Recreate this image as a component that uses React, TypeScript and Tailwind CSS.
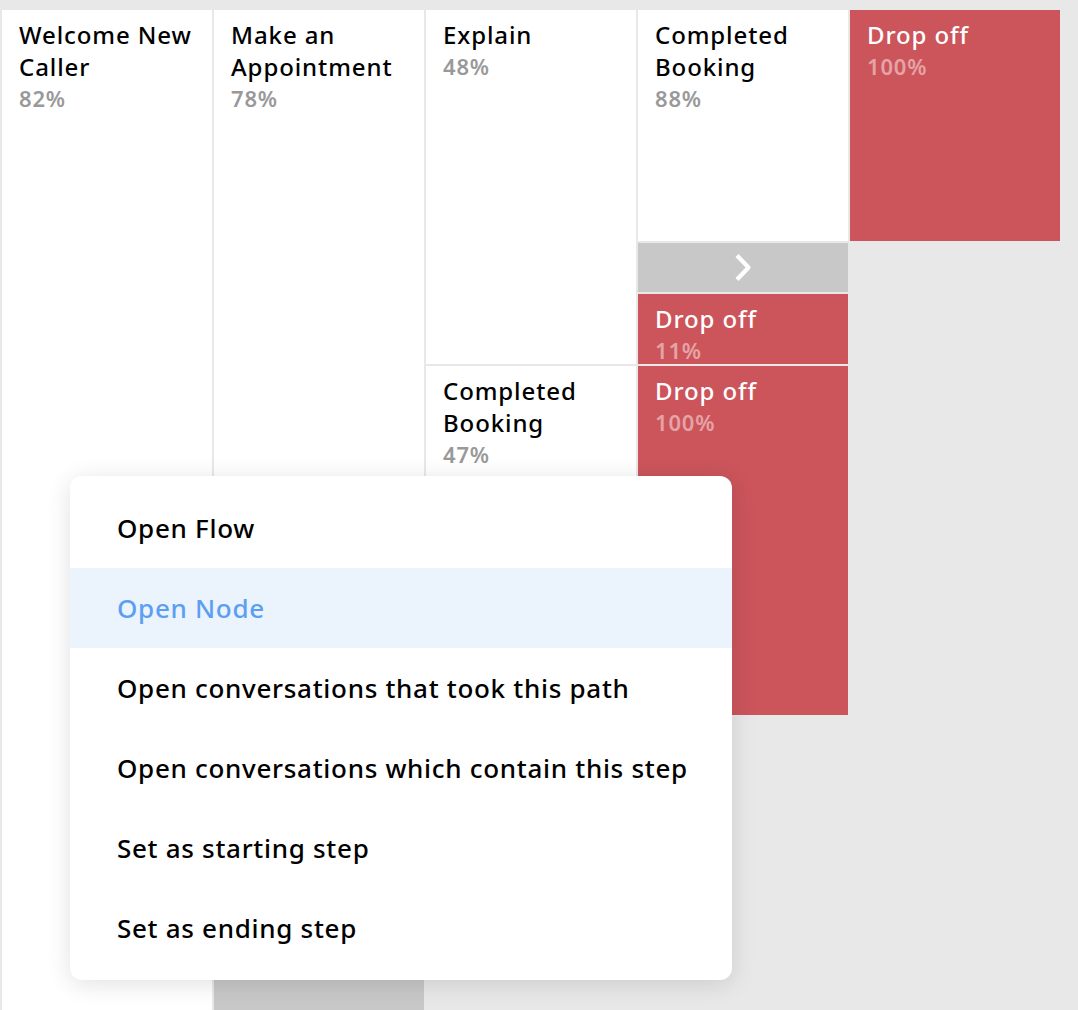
type Cell = {
  title: string;
  pct: string;
  h: string;
  drop?: boolean;
};

const font = { fontFamily: "'Noto Sans', Lato, sans-serif" };

function Node({ title, pct, h, drop }: Cell) {
  return (
    <div
      className={`${h} shrink-0 overflow-hidden px-[17px] pt-[9px] ${drop ? "bg-[#cb555b]" : "bg-white"}`}
    >
      <div
        className={`text-[24px] leading-[32px] font-medium tracking-[0.9px] ${drop ? "text-white" : "text-black"}`}
      >
        {title}
      </div>
      <div
        className={`text-[22px] leading-[30px] font-semibold tracking-[0.8px] ${drop ? "text-[#e6a3a6]" : "text-[#999999]"}`}
      >
        {pct}
      </div>
    </div>
  );
}

const menuItems = [
  "Open Flow",
  "Open Node",
  "Open conversations that took this path",
  "Open conversations which contain this step",
  "Set as starting step",
  "Set as ending step",
];

export default function App() {
  return (
    <div
      className="relative h-[1010px] w-[1078px] overflow-hidden bg-[#e8e8e8]"
      style={font}
    >
      <div className="flex h-full gap-[2px] pl-[2px] pt-[10px]">
        {/* column 1 */}
        <div className="flex w-[210px] flex-col">
          <Node title="Welcome New Caller" pct="82%" h="flex-1" />
        </div>

        {/* column 2 */}
        <div className="flex w-[210px] flex-col gap-[2px]">
          <Node title="Make an Appointment" pct="78%" h="h-[966px]" />
          <div className="flex-1 bg-[#c8c8c8]" />
        </div>

        {/* column 3 */}
        <div className="flex w-[210px] flex-col gap-[2px]">
          <Node title="Explain" pct="48%" h="h-[354px]" />
          <Node title="Completed Booking" pct="47%" h="h-[350px]" />
        </div>

        {/* column 4 */}
        <div className="flex w-[210px] flex-col gap-[2px]">
          <Node title="Completed Booking" pct="88%" h="h-[231px]" />
          <div className="flex h-[49px] shrink-0 items-center justify-center bg-[#c8c8c8]">
            <svg width="20" height="31" viewBox="0 0 20 31" fill="none">
              <path
                d="M4 3.5 L15.5 15.5 L4 27.5"
                stroke="white"
                strokeWidth="4.2"
                strokeLinejoin="round"
              />
            </svg>
          </div>
          <Node title="Drop off" pct="11%" h="h-[70px]" drop />
          <Node title="Drop off" pct="100%" h="h-[349px]" drop />
        </div>

        {/* column 5 */}
        <div className="flex w-[210px] flex-col">
          <Node title="Drop off" pct="100%" h="h-[231px]" drop />
        </div>
      </div>

      {/* context menu */}
      <div className="absolute left-[70px] top-[476px] w-[662px] rounded-[12px] bg-white py-[12px] shadow-[0_4px_24px_rgba(0,0,0,0.12)]">
        {menuItems.map((item) => {
          const active = item === "Open Node";
          return (
            <div
              key={item}
              className={`flex h-[80px] items-center pl-[47px] text-[26px] font-medium tracking-[0.7px] ${active ? "bg-[#ebf3fd] text-[#5c9ff2]" : "text-black"}`}
            >
              {item}
            </div>
          );
        })}
      </div>
    </div>
  );
}
